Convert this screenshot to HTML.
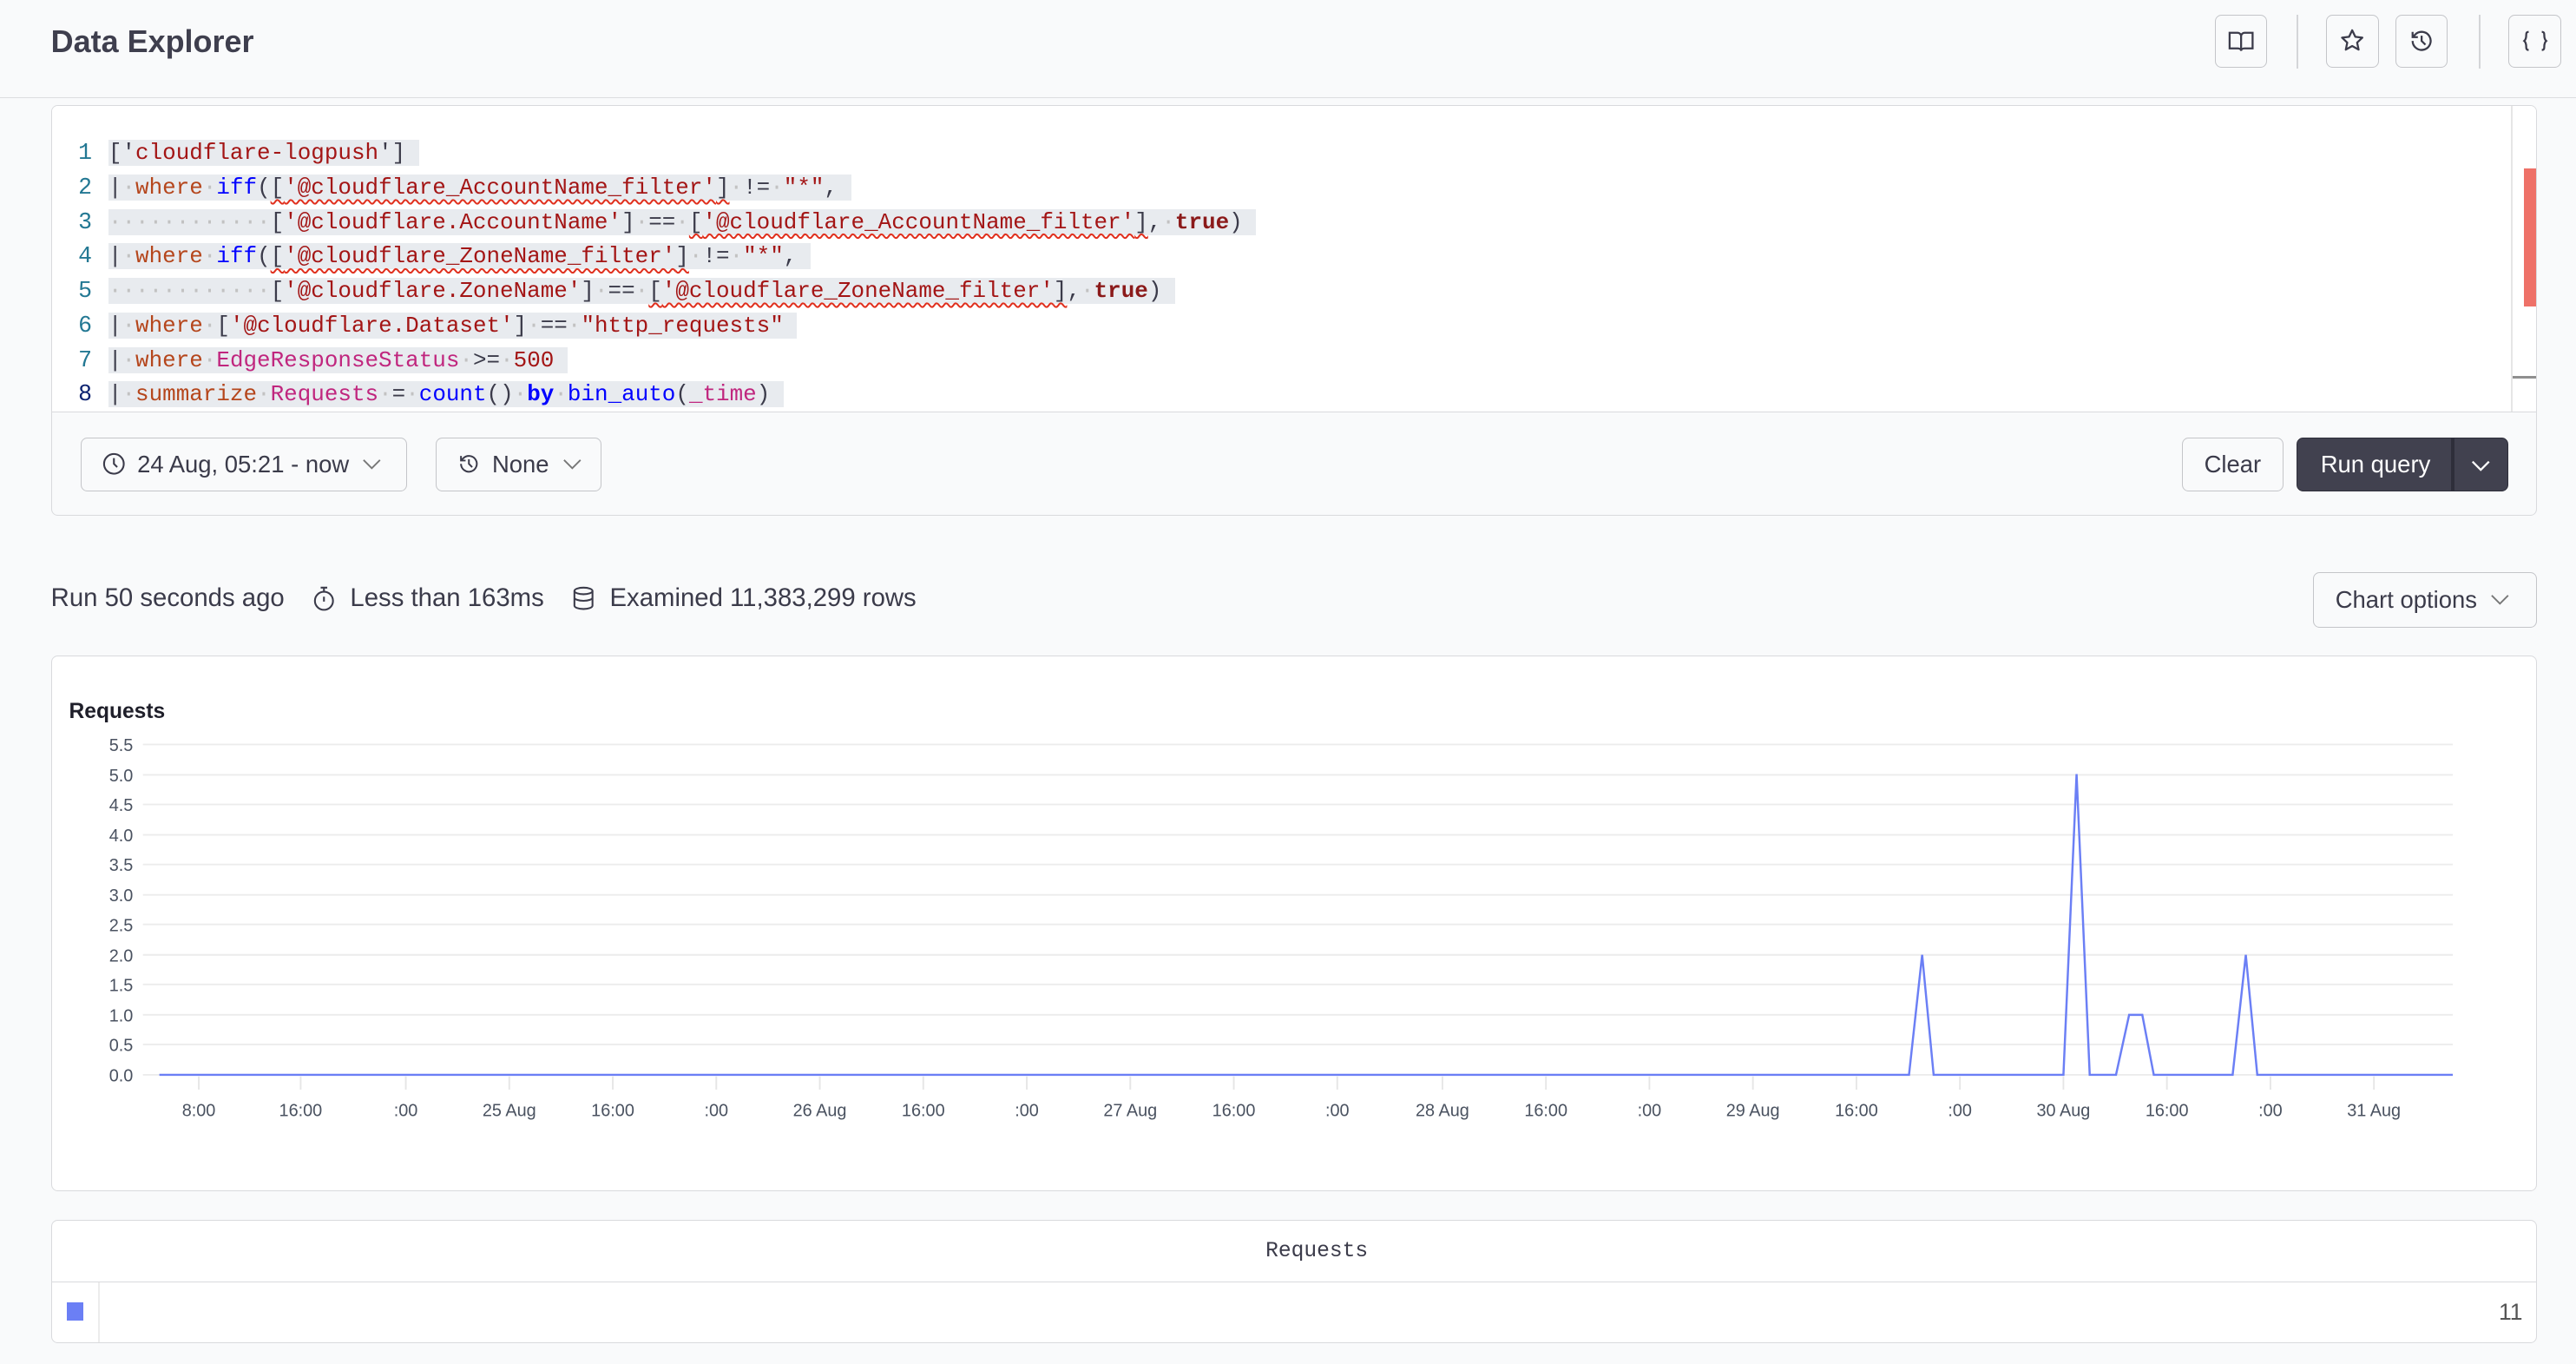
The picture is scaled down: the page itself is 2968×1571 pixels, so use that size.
<!DOCTYPE html>
<html><head><meta charset="utf-8">
<style>
html{zoom:1.89286}
body{margin:0;width:1568px;height:830px;background:#f9fafb;font-family:"Liberation Sans",sans-serif;color:#3b3b4a;position:relative;overflow:hidden}
.abs{position:absolute}
.hdr{left:0;top:0;width:1568px;height:59px;border-bottom:1px solid #dcdde0;background:#f9fafb}
.ttl{left:31px;top:14px;font-size:19px;font-weight:bold;color:#3f3f4e}
.ib{width:31px;height:31px;border:1px solid #c4c5c9;border-radius:4px;background:#f9fafb;top:9px;display:flex;align-items:center;justify-content:center}
.sep{width:1px;height:33px;background:#d4d5d8;top:9px}
.box{border:1px solid #d9dadd;border-radius:4px;background:#fff}
.code{font-family:"Liberation Mono",monospace;font-size:13.7px;line-height:21px;white-space:pre}
.ln{left:42px;width:14px;text-align:right;color:#237893;font-size:14px}
.ln b{font-weight:normal;color:#0b216f}
.hl{background:#e8ebef}
.s{color:#a31515}
.k{color:#b5461c}
.f{color:#0000ff}
.t{color:#8b1a1a;font-weight:bold}
.v{color:#c0267e}
.d{color:#c2c2c2}
.u{text-decoration:underline wavy #e0301e;text-decoration-thickness:1px;text-underline-offset:3px}
.btn{border:1px solid #c4c5c9;border-radius:4px;background:#f9fafb;height:31px;display:flex;align-items:center;font-size:14.5px;color:#3b3b4a;box-sizing:border-box}
.chev{margin-left:8px}
</style></head><body>
<div class="abs hdr"></div>
<div class="abs ttl">Data Explorer</div>
<div class="abs ib" style="left:1348px"><svg width="16" height="14" viewBox="0 0 16 14" fill="none" stroke="#3b3b4a" stroke-width="1.2"><path d="M1 2h5c1 0 2 1 2 2v9c0-1-1-1.5-2-1.5H1z M15 2h-5c-1 0-2 1-2 2v9c0-1 1-1.5 2-1.5h5z"/></svg></div>
<div class="abs sep" style="left:1398px"></div>
<div class="abs ib" style="left:1416px"><svg width="16" height="16" viewBox="0 0 16 16" fill="none" stroke="#3b3b4a" stroke-width="1.2" stroke-linejoin="round"><path d="M8 1.5l1.9 4 4.3.5-3.2 3 .9 4.3L8 11.1l-3.9 2.2.9-4.3-3.2-3 4.3-.5z"/></svg></div>
<div class="abs ib" style="left:1458px"><svg width="16" height="16" viewBox="0 0 16 16" fill="none" stroke="#3b3b4a" stroke-width="1.2"><path d="M2.5 8a5.5 5.5 0 1 0 1.6-3.9L2.5 5.7 M2.5 2.5v3.2h3.2 M8 4.8V8l2.3 2.3"/></svg></div>
<div class="abs sep" style="left:1509px"></div>
<div class="abs ib" style="left:1527px"><svg width="18" height="16" viewBox="0 0 18 16" fill="none" stroke="#3b3b4a" stroke-width="1.2"><path d="M5 2.5c-1.5 0-1.5 1-1.5 2s0 2.5-1.2 3.5c1.2 1 1.2 2.5 1.2 3.5s0 2 1.5 2 M13 2.5c1.5 0 1.5 1 1.5 2s0 2.5 1.2 3.5c-1.2 1-1.2 2.5-1.2 3.5s0 2-1.5 2"/></svg></div>

<!-- editor -->
<div class="abs box" style="left:31px;top:64px;width:1512px;height:249px;background:#f9fafb;overflow:hidden">
 <div class="abs" style="left:0;top:0;width:1512px;height:186px;background:#fff;border-bottom:1px solid #d9dadd"></div>
 <div class="abs" style="left:1497px;top:0;width:1px;height:186px;background:#e6e6e6"></div>
 <div class="abs" style="left:1505px;top:38px;width:8px;height:84px;background:#ee7168"></div>
 <div class="abs" style="left:1498px;top:164px;width:15px;height:2px;background:#8f8f8f"></div>
</div>
<div class="abs code ln" style="top:83px">1
2
3
4
5
6
7
<b>8</b></div>
<div class="abs code" style="left:66px;top:83px"><span class="hl">['<span class="s">cloudflare-logpush</span>'] </span>
<span class="hl">|<span class="d">·</span><span class="k">where</span><span class="d">·</span><span class="f">iff</span>(<span class="u">[<span class="s">'@cloudflare_AccountName_filter'</span>]</span><span class="d">·</span>!=<span class="d">·</span><span class="s">"*"</span>, </span>
<span class="hl"><span class="d">············</span>[<span class="s">'@cloudflare.AccountName'</span>]<span class="d">·</span>==<span class="d">·</span><span class="u">[<span class="s">'@cloudflare_AccountName_filter'</span>]</span>,<span class="d">·</span><span class="t">true</span>) </span>
<span class="hl">|<span class="d">·</span><span class="k">where</span><span class="d">·</span><span class="f">iff</span>(<span class="u">[<span class="s">'@cloudflare_ZoneName_filter'</span>]</span><span class="d">·</span>!=<span class="d">·</span><span class="s">"*"</span>, </span>
<span class="hl"><span class="d">············</span>[<span class="s">'@cloudflare.ZoneName'</span>]<span class="d">·</span>==<span class="d">·</span><span class="u">[<span class="s">'@cloudflare_ZoneName_filter'</span>]</span>,<span class="d">·</span><span class="t">true</span>) </span>
<span class="hl">|<span class="d">·</span><span class="k">where</span><span class="d">·</span>[<span class="s">'@cloudflare.Dataset'</span>]<span class="d">·</span>==<span class="d">·</span><span class="s">"http_requests"</span> </span>
<span class="hl">|<span class="d">·</span><span class="k">where</span><span class="d">·</span><span class="v">EdgeResponseStatus</span><span class="d">·</span>&gt;=<span class="d">·</span><span class="s">500</span> </span>
<span class="hl">|<span class="d">·</span><span class="k">summarize</span><span class="d">·</span><span class="v">Requests</span><span class="d">·</span>=<span class="d">·</span><span class="f">count</span>()<span class="d">·</span><b style="color:#0000ff">by</b><span class="d">·</span><span class="f">bin_auto</span>(<span class="v">_time</span>) </span></div>

<div class="abs btn" style="left:49px;top:266px;width:199px;height:33px;padding-left:13px"><svg width="14" height="14" viewBox="0 0 14 14" fill="none" stroke="#3b3b4a" stroke-width="1.1"><circle cx="7" cy="7" r="6"/><path d="M7 3.5V7l2 2"/></svg><span style="margin-left:7px">24 Aug, 05:21 - now</span><svg class="chev" width="12" height="8" viewBox="0 0 12 8" fill="none" stroke="#777" stroke-width="1"><path d="M1 1.5l5 5 5-5"/></svg></div>
<div class="abs btn" style="left:265px;top:266px;width:101px;height:33px;padding-left:13px"><svg width="14" height="14" viewBox="0 0 16 16" fill="none" stroke="#3b3b4a" stroke-width="1.2"><path d="M2.5 8a5.5 5.5 0 1 0 1.6-3.9L2.5 5.7 M2.5 2.5v3.2h3.2 M8 4.8V8l2.3 2.3"/></svg><span style="margin-left:7px">None</span><svg class="chev" width="12" height="8" viewBox="0 0 12 8" fill="none" stroke="#777" stroke-width="1"><path d="M1 1.5l5 5 5-5"/></svg></div>
<div class="abs btn" style="left:1328px;top:266px;width:62px;height:33px;justify-content:center">Clear</div>
<div class="abs btn" style="left:1398px;top:266px;width:129px;height:33px;background:#41414f;border-color:#2e2e3a;color:#fff;padding-left:14px">Run query</div>
<div class="abs" style="left:1492px;top:266px;width:2px;height:33px;background:#2e2e3a"></div>
<svg class="abs" style="left:1503px;top:278px" width="14" height="10" viewBox="0 0 14 10" fill="none" stroke="#fff" stroke-width="1.2"><path d="M2 3l5 5 5-5"/></svg>

<!-- stats -->
<div class="abs" style="left:31px;top:355px;font-size:15.5px;color:#3b3b4a;display:flex;align-items:center;white-space:nowrap">Run 50 seconds ago
<svg style="margin-left:17px" width="14" height="16" viewBox="0 0 14 16" fill="none" stroke="#3b3b4a" stroke-width="1.1"><circle cx="7" cy="9.5" r="5.5"/><path d="M5 1.5h4M7 1.5v2.5M7 7v3"/></svg>
<span style="margin-left:9px">Less than 163ms</span>
<svg style="margin-left:17px" width="14" height="16" viewBox="0 0 14 16" fill="none" stroke="#3b3b4a" stroke-width="1.1"><ellipse cx="7" cy="3.5" rx="5.5" ry="2"/><path d="M1.5 3.5v9c0 1.1 2.5 2 5.5 2s5.5-.9 5.5-2v-9M1.5 7.5c0 1.1 2.5 2 5.5 2s5.5-.9 5.5-2"/></svg>
<span style="margin-left:9px">Examined 11,383,299 rows</span></div>
<div class="abs btn" style="left:1408px;top:348px;width:136px;height:34px;padding-left:13px">Chart options<svg class="chev" width="12" height="8" viewBox="0 0 12 8" fill="none" stroke="#777" stroke-width="1"><path d="M1 1.5l5 5 5-5"/></svg></div>

<!-- chart -->
<div class="abs box" style="left:31px;top:399px;width:1512px;height:325px"></div>
<div class="abs" style="left:42px;top:426px;font-size:13px;font-weight:bold;color:#1f1f2a">Requests</div>
<svg class="abs" style="left:0;top:0" width="1568" height="830" font-family="Liberation Sans, sans-serif" font-size="10.5" fill="#4a5260">
<g stroke="#ececec" stroke-width="1">
<line x1="87" x2="1493" y1="453" y2="453"/><line x1="87" x2="1493" y1="471.5" y2="471.5"/><line x1="87" x2="1493" y1="489.5" y2="489.5"/><line x1="87" x2="1493" y1="508" y2="508"/><line x1="87" x2="1493" y1="526" y2="526"/><line x1="87" x2="1493" y1="544.5" y2="544.5"/><line x1="87" x2="1493" y1="562.5" y2="562.5"/><line x1="87" x2="1493" y1="581" y2="581"/><line x1="87" x2="1493" y1="599" y2="599"/><line x1="87" x2="1493" y1="617.5" y2="617.5"/><line x1="87" x2="1493" y1="635.5" y2="635.5"/><line x1="87" x2="1493" y1="654" y2="654"/>
</g>
<g text-anchor="end">
<text x="81" y="457">5.5</text><text x="81" y="475.5">5.0</text><text x="81" y="493.5">4.5</text><text x="81" y="512">4.0</text><text x="81" y="530">3.5</text><text x="81" y="548.5">3.0</text><text x="81" y="566.5">2.5</text><text x="81" y="585">2.0</text><text x="81" y="603">1.5</text><text x="81" y="621.5">1.0</text><text x="81" y="639.5">0.5</text><text x="81" y="658">0.0</text>
</g>
<g stroke="#e6e6e6"><line x1="121" x2="121" y1="655" y2="663"/><line x1="183" x2="183" y1="655" y2="663"/><line x1="247" x2="247" y1="655" y2="663"/><line x1="310" x2="310" y1="655" y2="663"/><line x1="373" x2="373" y1="655" y2="663"/><line x1="436" x2="436" y1="655" y2="663"/><line x1="499" x2="499" y1="655" y2="663"/><line x1="562" x2="562" y1="655" y2="663"/><line x1="625" x2="625" y1="655" y2="663"/><line x1="688" x2="688" y1="655" y2="663"/><line x1="751" x2="751" y1="655" y2="663"/><line x1="814" x2="814" y1="655" y2="663"/><line x1="878" x2="878" y1="655" y2="663"/><line x1="941" x2="941" y1="655" y2="663"/><line x1="1004" x2="1004" y1="655" y2="663"/><line x1="1067" x2="1067" y1="655" y2="663"/><line x1="1130" x2="1130" y1="655" y2="663"/><line x1="1193" x2="1193" y1="655" y2="663"/><line x1="1256" x2="1256" y1="655" y2="663"/><line x1="1319" x2="1319" y1="655" y2="663"/><line x1="1382" x2="1382" y1="655" y2="663"/><line x1="1445" x2="1445" y1="655" y2="663"/></g>
<g text-anchor="middle">
<text x="121" y="679">8:00</text><text x="183" y="679">16:00</text><text x="247" y="679">:00</text><text x="310" y="679">25 Aug</text><text x="373" y="679">16:00</text><text x="436" y="679">:00</text><text x="499" y="679">26 Aug</text><text x="562" y="679">16:00</text><text x="625" y="679">:00</text><text x="688" y="679">27 Aug</text><text x="751" y="679">16:00</text><text x="814" y="679">:00</text><text x="878" y="679">28 Aug</text><text x="941" y="679">16:00</text><text x="1004" y="679">:00</text><text x="1067" y="679">29 Aug</text><text x="1130" y="679">16:00</text><text x="1193" y="679">:00</text><text x="1256" y="679">30 Aug</text><text x="1319" y="679">16:00</text><text x="1382" y="679">:00</text><text x="1445" y="679">31 Aug</text>
</g>
<polyline fill="none" stroke="#6b7ff5" stroke-width="1.3" points="97,654 1162,654 1170,581 1177,654 1256,654 1264,471 1272,654 1288,654 1296,617.5 1304,617.5 1311,654 1359,654 1367,581 1374,654 1493,654"/>
</svg>

<!-- table -->
<div class="abs box" style="left:31px;top:742px;width:1512px;height:74px;overflow:hidden">
 <div class="abs" style="left:0;top:37px;width:1512px;height:1px;background:#d9dadd"></div>
 <div class="abs" style="left:28px;top:38px;width:1px;height:36px;background:#ececec"></div>
 <div class="abs" style="left:9px;top:50px;width:10px;height:11px;background:#6b7ff5"></div>
 <div class="abs" style="left:0;top:12px;width:1540px;text-align:center;font-family:'Liberation Mono',monospace;font-size:13px;color:#3b3b4a">Requests</div>
 <div class="abs" style="right:8px;top:48px;font-size:14px;color:#555">11</div>
</div>
</body></html>
